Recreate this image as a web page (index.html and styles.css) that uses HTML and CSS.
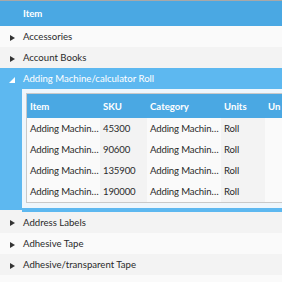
FILE: index.html
```html
<!DOCTYPE html>
<html lang="en">
<head>
  <meta charset="UTF-8" />
  <title>Items grid</title>
  <link rel="stylesheet" href="styles.css">
</head>
<body>
  <div class="grid">
    <table class="master">
      <thead>
        <tr>
          <th class="hier"></th>
          <th>Item</th>
        </tr>
      </thead>
      <tbody>
        <tr class="odd">
          <td class="hier"><span class="tri"></span></td>
          <td>Accessories</td>
        </tr>
        <tr class="even">
          <td class="hier"><span class="tri"></span></td>
          <td>Account Books</td>
        </tr>
        <tr class="open">
          <td class="hier"><span class="tri-open"></span></td>
          <td>Adding Machine/calculator Roll</td>
        </tr>
        <tr class="detail">
          <td class="hier"></td>
          <td class="detail-cell">
            <table class="sub">
              <thead>
                <tr>
                  <th class="c-item">Item</th>
                  <th class="c-sku">SKU</th>
                  <th class="c-cat">Category</th>
                  <th class="c-units">Units</th>
                  <th class="c-up">Un</th>
                </tr>
              </thead>
              <tbody>
                <tr><td>Adding Machin…</td><td>45300</td><td>Adding Machin…</td><td>Roll</td><td></td></tr>
                <tr><td>Adding Machin…</td><td>90600</td><td>Adding Machin…</td><td>Roll</td><td></td></tr>
                <tr><td>Adding Machin…</td><td>135900</td><td>Adding Machin…</td><td>Roll</td><td></td></tr>
                <tr><td>Adding Machin…</td><td>190000</td><td>Adding Machin…</td><td>Roll</td><td></td></tr>
              </tbody>
            </table>
          </td>
        </tr>
        <tr class="even">
          <td class="hier"><span class="tri"></span></td>
          <td>Address Labels</td>
        </tr>
        <tr class="odd">
          <td class="hier"><span class="tri"></span></td>
          <td>Adhesive Tape</td>
        </tr>
        <tr class="even">
          <td class="hier"><span class="tri"></span></td>
          <td>Adhesive/transparent Tape</td>
        </tr>
        <tr class="odd">
          <td class="hier"></td>
          <td></td>
        </tr>
      </tbody>
    </table>
  </div>
</body>
</html>
```

FILE: styles.css
```css
body {
  margin: 0;
  font-family: Lato, "Open Sans", sans-serif;
  font-size: 9.6px;
  color: #2a2a2a;
  background: #fff;
}

.grid {
  width: 282px;
  height: 282px;
  overflow: hidden;
  border-top: 1px solid #a8a8a8;
  box-sizing: border-box;
}

table {
  border-collapse: collapse;
  border-spacing: 0;
}

.master {
  width: 282px;
  table-layout: fixed;
}

.master th,
.master td {
  padding: 0 0 0 1px;
  text-align: left;
  white-space: nowrap;
}

.master th {
  height: 25px;
  background: #4aa8e3;
  color: #fff;
  font-weight: bold;
}

.master .hier {
  width: 22px;
  padding: 0;
  text-align: center;
}

.master tbody td {
  height: 21px;
}

.odd td { background: #fafafa; }
.even td { background: #f3f3f3; }

.open td {
  background: #5db8f0;
  color: #fff;
}

.tri {
  display: inline-block;
  width: 0;
  height: 0;
  margin-left: 3px;
  border-top: 3.5px solid transparent;
  border-bottom: 3.5px solid transparent;
  border-left: 5px solid #333;
  vertical-align: middle;
}

.tri-open {
  display: inline-block;
  width: 0;
  height: 0;
  margin-left: 2px;
  border-left: 6px solid transparent;
  border-bottom: 6px solid #fff;
  vertical-align: middle;
}

.detail .hier {
  background: #5db8f0;
}

.master .detail-cell {
  background: #eef6fc;
  padding: 4px 0 5px 4px;
  border-bottom: 4px solid #5db8f0;
}

.sub {
  table-layout: fixed;
  width: 300px;
  border: 1px solid #c9c9c9;
}

.sub th,
.sub td {
  padding: 0 3px;
  overflow: hidden;
  white-space: nowrap;
  text-align: left;
}

.sub th {
  height: 24px;
  background: #4aa8e3;
  color: #fff;
  font-weight: bold;
}

.sub td {
  height: 21px;
  background: #fafafa;
  letter-spacing: -0.15px;
}

.sub td:nth-child(even) {
  background: #f3f3f3;
}

.c-item { width: 67px; }
.c-sku { width: 41px; }
.c-cat { width: 68px; }
.c-units { width: 38px; }
.c-up { width: 60px; }
```
